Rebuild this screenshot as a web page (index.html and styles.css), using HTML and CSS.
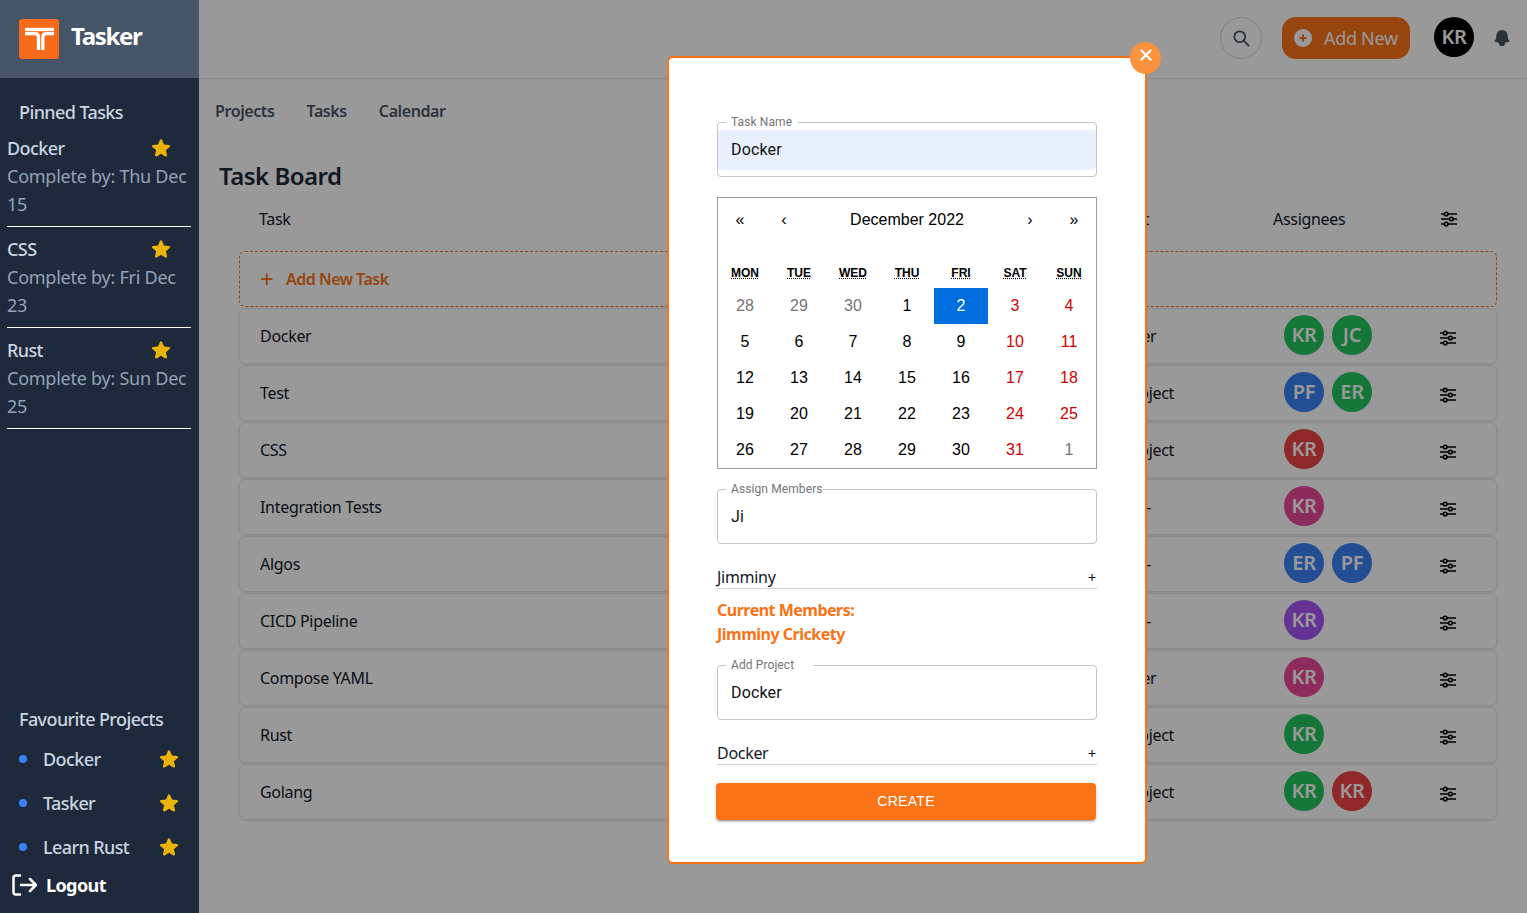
FILE: index.html
```html
<!DOCTYPE html>
<html lang="en">
<head>
  <meta charset="UTF-8">
  <meta name="viewport" content="width=device-width, initial-scale=1.0">
  <title>Tasker</title>
  <link rel="stylesheet" href="styles.css">
</head>
<body>
  <svg class="defs" width="0" height="0">
    <symbol id="star" viewBox="0 0 24 24">
      <path fill="#eab308" d="M10.788 3.21c.448-1.077 1.976-1.077 2.424 0l2.082 5.007 5.404.433c1.164.093 1.636 1.545.749 2.305l-4.117 3.527 1.257 5.273c.271 1.136-.964 2.033-1.96 1.425L12 18.354 7.373 21.18c-.996.608-2.231-.29-1.96-1.425l1.257-5.273-4.117-3.527c-.887-.76-.415-2.212.749-2.305l5.404-.433 2.082-5.006z"/>
    </symbol>
    <symbol id="sliders" viewBox="0 0 16 16">
      <g fill="none" stroke="#000" stroke-width="1.6">
        <path d="M0 3h3.4M7 3h9M0 8h8.6M12.200 8H16M0 13h3.400M7 13h9"/>
        <circle cx="5.200" cy="3" r="1.800"/>
        <circle cx="10.400" cy="8" r="1.800"/>
        <circle cx="5.200" cy="13" r="1.800"/>
      </g>
    </symbol>
  </svg>

  <aside class="sidebar">
    <div class="brand">
      <svg class="brand-logo" viewBox="0 0 40 40">
        <rect width="40" height="40" rx="3" fill="#f76b1c"/>
        <g fill="none" stroke="#fff" stroke-width="3.300">
          <path d="M6 10.500h29"/>
          <path d="M6 14.700h10q3.500 0 3.500 3.500V31"/>
          <path d="M35 14.700h-7.500q-3.700 0-3.700 3.500V31"/>
        </g>
      </svg>
      <span class="brand-name">Tasker</span>
    </div>

    <h3 class="side-title">Pinned Tasks</h3>
    <div class="pinned">
      <div class="pinned-head"><span>Docker</span><svg class="star"><use href="#star"/></svg></div>
      <p>Complete by: Thu Dec 15</p>
    </div>
    <div class="pinned">
      <div class="pinned-head"><span>CSS</span><svg class="star"><use href="#star"/></svg></div>
      <p>Complete by: Fri Dec 23</p>
    </div>
    <div class="pinned">
      <div class="pinned-head"><span>Rust</span><svg class="star"><use href="#star"/></svg></div>
      <p>Complete by: Sun Dec 25</p>
    </div>

    <h3 class="side-title fav-title">Favourite Projects</h3>
    <ul class="favs">
      <li><i class="dot"></i><span>Docker</span><svg class="star"><use href="#star"/></svg></li>
      <li><i class="dot"></i><span>Tasker</span><svg class="star"><use href="#star"/></svg></li>
      <li><i class="dot"></i><span>Learn Rust</span><svg class="star"><use href="#star"/></svg></li>
    </ul>
    <a class="logout">
      <svg viewBox="0 0 25 22" width="25" height="22" fill="none" stroke="#fff" stroke-width="2.500" stroke-linecap="round" stroke-linejoin="round">
        <path d="M8 1.500H4Q1.500 1.500 1.500 4v14q0 2.500 2.500 2.500h4"/>
        <path d="M9 11h14.500M18 5l6 6-6 6"/>
      </svg>
      Logout
    </a>
  </aside>

  <main class="main">
    <header class="topbar">
      <button class="search-btn">
        <svg viewBox="0 0 24 24" width="20" height="20" fill="none" stroke="#4b5563" stroke-width="2.200" stroke-linecap="round"><circle cx="10.500" cy="10.500" r="6.500"/><path d="m15.500 15.500 5.500 5.500"/></svg>
      </button>
      <button class="add-btn">
        <svg viewBox="0 0 18 18" width="18" height="18"><circle cx="9" cy="9" r="9" fill="#fff"/><path d="M9 5.500v7M5.500 9h7" stroke="#f97316" stroke-width="2"/></svg>
        Add New
      </button>
      <span class="me">KR</span>
      <svg class="bell" viewBox="0 0 24 24" width="20" height="20"><path fill="#4b5563" d="M12 2.250A6.750 6.750 0 005.250 9v.75a8.217 8.217 0 01-2.119 5.520.75.75 0 00.298 1.206c1.544.57 3.160.99 4.831 1.243a3.750 3.750 0 107.480 0 24.583 24.583 0 004.830-1.244.75.75 0 00.298-1.205 8.217 8.217 0 01-2.118-5.520V9A6.750 6.750 0 0012 2.250z"/></svg>
    </header>

    <nav class="tabs">
      <a>Projects</a>
      <a>Tasks</a>
      <a>Calendar</a>
    </nav>

    <h1 class="board-title">Task Board</h1>

    <div class="board-head">
      <span>Task</span>
      <span>Project</span>
      <span>Assignees</span>
      <svg class="sliders"><use href="#sliders"/></svg>
    </div>

    <div class="add-task"><span class="plus">+</span> Add New Task</div>

    <div class="row">
      <span>Docker</span><span>Docker</span>
      <div class="people"><b class="green">KR</b><b class="green">JC</b></div>
      <svg class="sliders"><use href="#sliders"/></svg>
    </div>
    <div class="row">
      <span>Test</span><span>AI Project</span>
      <div class="people"><b class="blue">PF</b><b class="green">ER</b></div>
      <svg class="sliders"><use href="#sliders"/></svg>
    </div>
    <div class="row">
      <span>CSS</span><span>AI Project</span>
      <div class="people"><b class="red">KR</b></div>
      <svg class="sliders"><use href="#sliders"/></svg>
    </div>
    <div class="row">
      <span>Integration Tests</span><span>Code -</span>
      <div class="people"><b class="pink">KR</b></div>
      <svg class="sliders"><use href="#sliders"/></svg>
    </div>
    <div class="row">
      <span>Algos</span><span>Code -</span>
      <div class="people"><b class="blue">ER</b><b class="blue">PF</b></div>
      <svg class="sliders"><use href="#sliders"/></svg>
    </div>
    <div class="row">
      <span>CICD Pipeline</span><span>Code -</span>
      <div class="people"><b class="purple">KR</b></div>
      <svg class="sliders"><use href="#sliders"/></svg>
    </div>
    <div class="row">
      <span>Compose YAML</span><span>Docker</span>
      <div class="people"><b class="pink">KR</b></div>
      <svg class="sliders"><use href="#sliders"/></svg>
    </div>
    <div class="row">
      <span>Rust</span><span>AI Project</span>
      <div class="people"><b class="green">KR</b></div>
      <svg class="sliders"><use href="#sliders"/></svg>
    </div>
    <div class="row">
      <span>Golang</span><span>AI Project</span>
      <div class="people"><b class="green">KR</b><b class="red">KR</b></div>
      <svg class="sliders"><use href="#sliders"/></svg>
    </div>

    <div class="overlay">
      <form class="modal">
        <button type="button" class="close">
          <svg viewBox="0 0 12 12" width="12" height="12" stroke="#fff" stroke-width="2.400" stroke-linecap="round"><path d="M1.500 1.500l9 9M10.500 1.500l-9 9"/></svg>
        </button>

        <fieldset class="field">
          <legend>Task Name</legend>
          <input class="filled" type="text" value="Docker">
        </fieldset>

        <div class="calendar">
          <div class="cal-nav">
            <button type="button">«</button>
            <button type="button">‹</button>
            <span>December 2022</span>
            <button type="button">›</button>
            <button type="button">»</button>
          </div>
          <div class="cal-week">
            <abbr>Mon</abbr><abbr>Tue</abbr><abbr>Wed</abbr><abbr>Thu</abbr><abbr>Fri</abbr><abbr>Sat</abbr><abbr>Sun</abbr>
          </div>
          <div class="cal-days">
            <span class="off">28</span><span class="off">29</span><span class="off">30</span><span>1</span><span class="today">2</span><span class="we">3</span><span class="we">4</span>
            <span>5</span><span>6</span><span>7</span><span>8</span><span>9</span><span class="we">10</span><span class="we">11</span>
            <span>12</span><span>13</span><span>14</span><span>15</span><span>16</span><span class="we">17</span><span class="we">18</span>
            <span>19</span><span>20</span><span>21</span><span>22</span><span>23</span><span class="we">24</span><span class="we">25</span>
            <span>26</span><span>27</span><span>28</span><span>29</span><span>30</span><span class="we">31</span><span class="off">1</span>
          </div>
        </div>

        <fieldset class="field field-members">
          <legend class="legend-tight">Assign Members</legend>
          <input type="text" value="Ji">
        </fieldset>
        <div class="option"><span>Jimminy</span><span class="option-add">+</span></div>

        <div class="members">
          <div>Current Members:</div>
          <div>Jimminy Crickety</div>
        </div>

        <fieldset class="field field-project">
          <legend class="legend-wide">Add Project</legend>
          <input type="text" value="Docker">
        </fieldset>
        <div class="option"><span>Docker</span><span class="option-add">+</span></div>

        <button type="button" class="create">CREATE</button>
      </form>
    </div>
  </main>
</body>
</html>
```

FILE: styles.css
```css
* {
  box-sizing: border-box;
}
html, body {
  height: 100%;
}
body {
  margin: 0;
  display: flex;
  overflow: hidden;
  font-family: 'Noto Sans', 'Open Sans', sans-serif;
  font-size: 16px;
  letter-spacing: -0.3px;
  color: #111827;
  background-color: #fff;
}
.defs {
  position: absolute;
}
button {
  font-family: inherit;
  cursor: pointer;
}

/* sidebar */
.sidebar {
  width: 199px;
  height: 913px;
  flex: none;
  display: flex;
  flex-direction: column;
  background-color: #1e293b;
  color: #cbd5e1;
  letter-spacing: -0.6px;
}
.brand {
  height: 78px;
  flex: none;
  display: flex;
  align-items: center;
  gap: 12px;
  padding-left: 19px;
  background-color: #475569;
}
.brand-logo {
  width: 40px;
  height: 40px;
}
.brand-name {
  margin-top: -8px;
  font-size: 24px;
  font-weight: 700;
  letter-spacing: -1.3px;
  color: #fff;
}
.side-title {
  margin: 22px 0 0 19px;
  font-size: 18px;
  line-height: 24px;
  font-weight: 500;
}
.pinned {
  margin: 0 8px 0 7px;
  height: 101px;
  border-bottom: 1px solid #fff;
}
.side-title + .pinned {
  height: 103px;
  padding-top: 2px;
}
.pinned-head {
  display: flex;
  justify-content: space-between;
  align-items: center;
  height: 44px;
  font-size: 18px;
  font-weight: 500;
}
.pinned p {
  margin: -8px 0 0;
  font-size: 18px;
  line-height: 28px;
  letter-spacing: -0.25px;
  color: #94a3b8;
}
.star {
  width: 22px;
  height: 22px;
  margin-right: 19px;
  flex: none;
}
.fav-title {
  margin-top: auto;
}
.favs {
  margin: 6px 0 0;
  padding: 0 0 0 19px;
  list-style: none;
  font-size: 18px;
  font-weight: 500;
}
.favs li {
  height: 44px;
  display: flex;
  align-items: center;
}
.dot {
  width: 8px;
  height: 8px;
  margin-right: 16px;
  border-radius: 50%;
  background-color: #3b82f6;
}
.favs span {
  flex: 1;
}
.logout {
  height: 32px;
  margin-bottom: 12px;
  display: flex;
  align-items: center;
  gap: 9px;
  padding-left: 12px;
  font-size: 18px;
  font-weight: 700;
  color: #fff;
}

/* main */
.main {
  position: relative;
  flex: 1;
  height: 913px;
}
.topbar {
  height: 79px;
  display: flex;
  align-items: flex-start;
  justify-content: flex-end;
  padding: 17px 15px 0 0;
  border-bottom: 1px solid #e5e7eb;
}
.search-btn {
  width: 42px;
  height: 42px;
  margin-right: 20px;
  display: flex;
  align-items: center;
  justify-content: center;
  padding: 0;
  border: 1px solid #d1d5db;
  border-radius: 50%;
  background: none;
}
.add-btn {
  width: 128px;
  height: 42px;
  margin-right: 24px;
  display: flex;
  align-items: center;
  gap: 12px;
  padding: 0 0 0 12px;
  border: 0;
  border-radius: 14px;
  background-color: #f97316;
  color: #fff;
  font-size: 18px;
  letter-spacing: -0.3px;
}
.me {
  width: 40px;
  height: 40px;
  margin-right: 18px;
  display: flex;
  align-items: center;
  justify-content: center;
  padding-bottom: 2px;
  border-radius: 50%;
  background-color: #000;
  color: #fff;
  font-size: 20px;
  font-weight: 600;
}
.bell {
  margin-top: 11px;
}
.tabs {
  display: flex;
  gap: 32px;
  padding: 20px 0 0 16px;
  line-height: 24px;
  font-weight: 600;
  letter-spacing: -0.4px;
  color: #4b5563;
}
.board-title {
  margin: 37px 0 0 20px;
  font-size: 24px;
  line-height: 32px;
  font-weight: 600;
  letter-spacing: -0.5px;
  color: #1f2937;
}
.board-head, .row {
  display: grid;
  align-items: center;
}
.board-head {
  grid-template-columns: 840px 174px 168px 1fr;
  margin: 15px 30px 0 60px;
  line-height: 24px;
}
.add-task {
  height: 56px;
  margin: 20px 30px 1px 40px;
  display: flex;
  align-items: center;
  padding-left: 20px;
  border: 1px dashed #f97316;
  border-radius: 6px;
  font-weight: 600;
  letter-spacing: -0.5px;
  color: #f97316;
}
.plus {
  width: 26px;
  font-size: 24px;
  font-weight: 400;
  line-height: 24px;
}
.row {
  grid-template-columns: 845px 179px 156px 1fr;
  height: 56px;
  margin: 0 30px 1px 40px;
  padding-left: 20px;
  border: 1px solid #e5e7eb;
  border-radius: 6px;
  box-shadow: 0 1px 2px rgba(0, 0, 0, 0.08);
}
.people {
  display: flex;
  gap: 8px;
  margin-top: -2px;
}
.people b {
  width: 40px;
  height: 40px;
  display: flex;
  align-items: center;
  justify-content: center;
  padding-bottom: 2px;
  border-radius: 50%;
  color: #fff;
  font-size: 20px;
  font-weight: 600;
}
.green { background-color: #22c55e; }
.blue { background-color: #3b82f6; }
.red { background-color: #ef4444; }
.pink { background-color: #ec4899; }
.purple { background-color: #a855f7; }
.sliders {
  width: 16px;
  height: 16px;
}
.row .sliders {
  margin-top: 4px;
}

/* modal */
.overlay {
  position: absolute;
  inset: 0;
  padding: 56px 0 0 468px;
  background-color: rgba(0, 0, 0, 0.4);
}
.modal {
  position: relative;
  width: 480px;
  height: 808px;
  padding: 57px 48px 0 48px;
  border: 2px solid #f97316;
  border-radius: 6px;
  background-color: #fff;
  font-family: Roboto, 'Liberation Sans', sans-serif;
  letter-spacing: 0;
}
.close {
  position: absolute;
  top: -16px;
  right: -16px;
  width: 31px;
  height: 32px;
  display: flex;
  align-items: center;
  justify-content: center;
  padding: 0 0 6px;
  border: 0;
  border-radius: 50%;
  background-color: #fb923c;
}
.field {
  width: 380px;
  margin: 0;
  padding: 0;
  border: 1px solid #c4c4c4;
  border-radius: 4px;
  min-width: 0;
}
.field legend {
  margin-left: 8px;
  padding: 0 6px 0 5px;
  font-size: 12px;
  line-height: 14px;
  letter-spacing: 0.1px;
  color: #757575;
}
.field legend.legend-tight {
  padding-right: 0;
}
.field legend.legend-wide {
  padding-right: 19px;
}
.field input {
  display: block;
  width: 100%;
  height: 40px;
  margin: 1px 0 6px;
  padding: 0 13px 2px;
  border: 0;
  border-radius: 3px;
  outline: none;
  background: none;
  font-family: inherit;
  font-size: 16px;
  letter-spacing: 0.15px;
  color: #111;
}
.field input.filled {
  background-color: #e8f0fe;
}
.calendar {
  width: 380px;
  height: 272px;
  margin-top: 20px;
  border: 1px solid #a0a096;
  font-family: 'Liberation Sans', Arial, sans-serif;
  font-size: 16px;
  color: #000;
}
.cal-nav {
  height: 44px;
  margin-bottom: 16px;
  display: flex;
  align-items: center;
}
.cal-nav button {
  width: 44px;
  height: 44px;
  padding: 0;
  border: 0;
  background: none;
  font-size: 16px;
  font-family: inherit;
  color: #000;
}
.cal-nav span {
  flex: 1;
  text-align: center;
}
.cal-week, .cal-days {
  display: grid;
  grid-template-columns: repeat(7, 54px);
}
.cal-week {
  height: 30px;
  align-items: center;
  text-align: center;
  font-size: 12px;
  font-weight: 700;
  text-transform: uppercase;
}
.cal-week abbr {
  text-decoration: underline dotted;
}
.cal-days span {
  height: 36px;
  display: flex;
  align-items: center;
  justify-content: center;
}
.cal-days .off {
  color: #757575;
}
.cal-days .we {
  color: #d10000;
}
.cal-days .today {
  background-color: #006edc;
  color: #fff;
}
.field-members {
  margin-top: 13px;
}
.option {
  width: 380px;
  height: 24px;
  margin-top: 21px;
  display: flex;
  justify-content: space-between;
  align-items: center;
  border-bottom: 1px solid #d1d5db;
  font-family: 'Noto Sans', sans-serif;
  letter-spacing: -0.3px;
}
.option-add {
  margin-right: 1px;
  font-size: 15px;
}
.members {
  margin-top: 9px;
  font-family: 'Noto Sans', sans-serif;
  letter-spacing: -0.5px;
  font-weight: 700;
  line-height: 24px;
  color: #f97316;
}
.field-project {
  margin-top: 12px;
}
.create {
  display: block;
  width: 380px;
  height: 37px;
  margin: 18px 0 0 -1px;
  padding-bottom: 3px;
  border: 0;
  border-radius: 4px;
  background-color: #f97316;
  box-shadow: 0 3px 1px -2px rgba(0, 0, 0, 0.2), 0 2px 2px rgba(0, 0, 0, 0.14), 0 1px 5px rgba(0, 0, 0, 0.12);
  color: #fff;
  font-family: 'Liberation Sans', Arial, sans-serif;
  font-size: 14px;
  letter-spacing: 0.3px;
}
```
